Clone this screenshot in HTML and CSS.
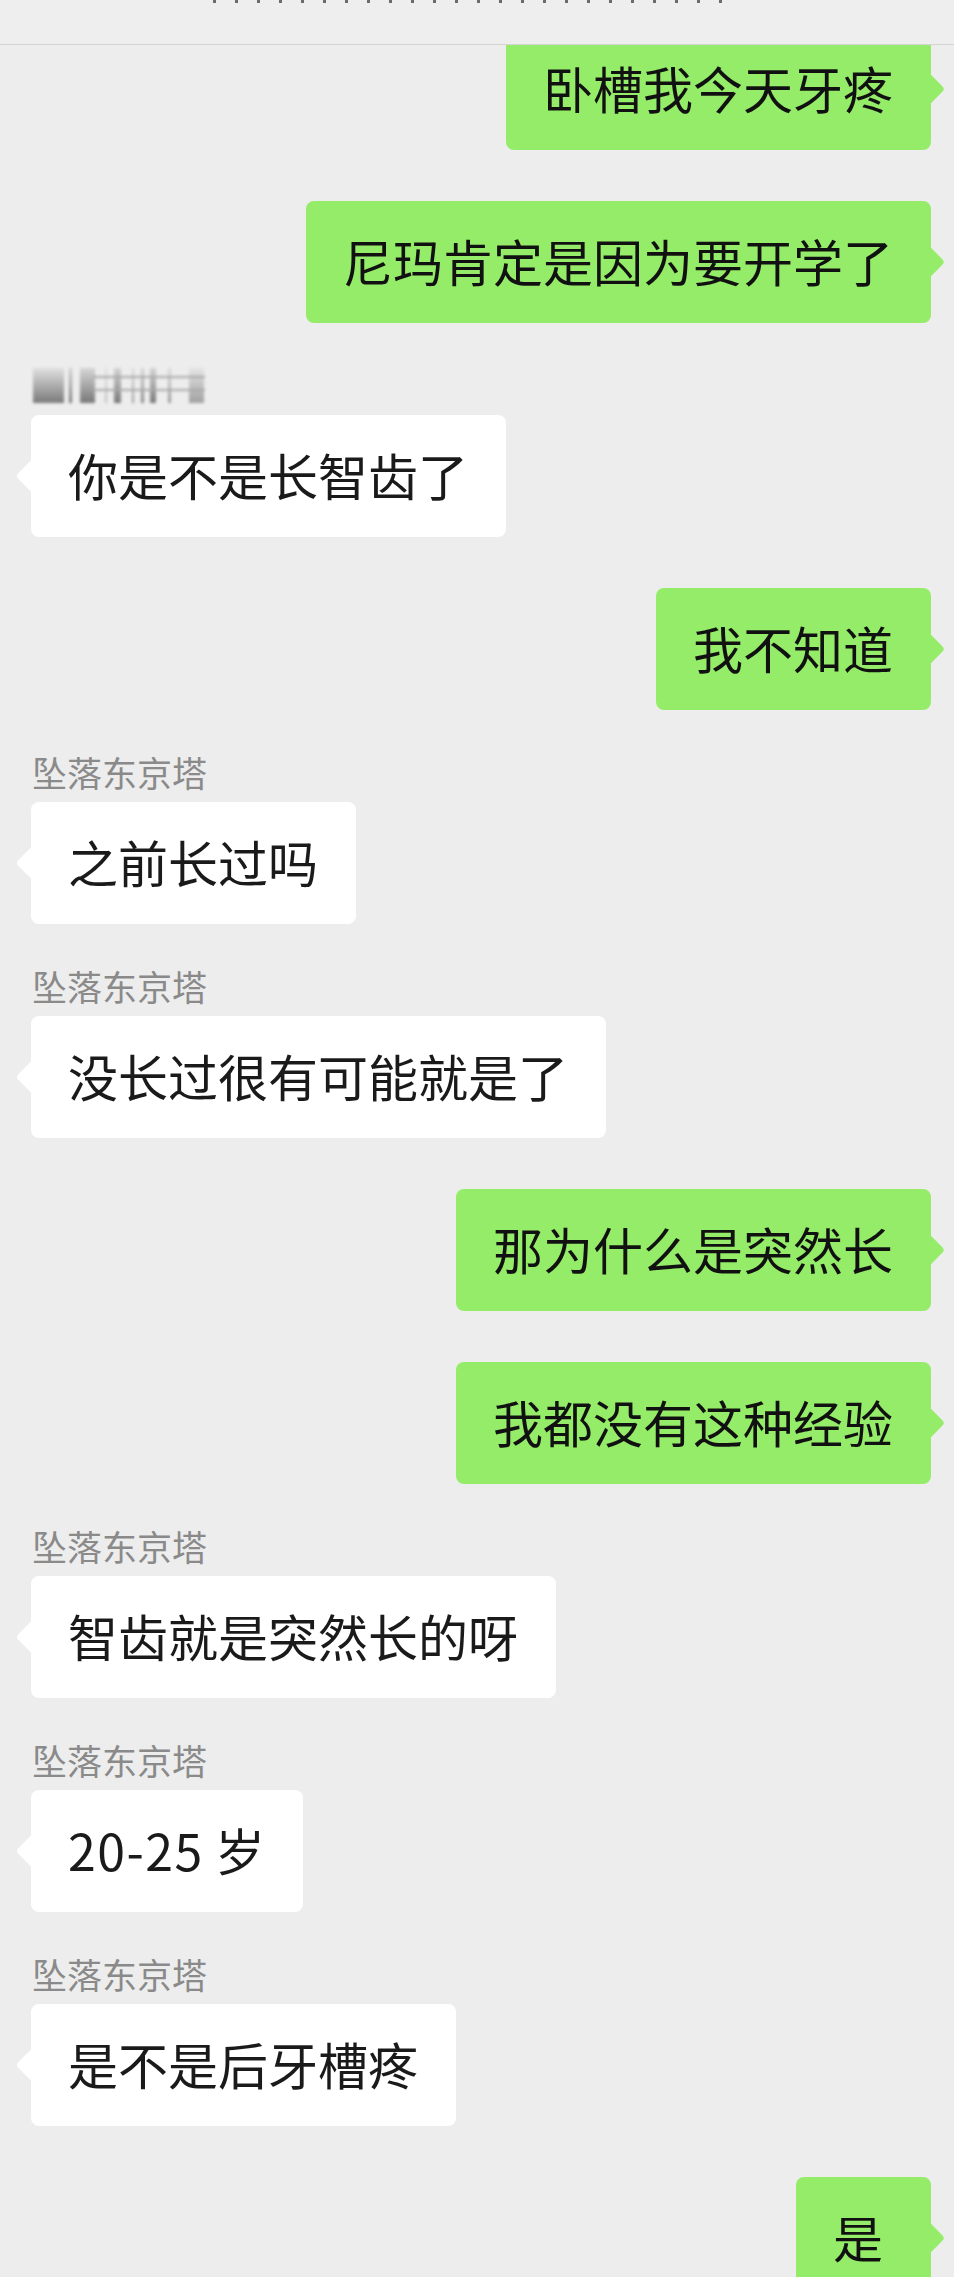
FILE: index.html
```html
<!DOCTYPE html>
<html lang="zh-CN">
<head>
<meta charset="utf-8">
<title>聊天</title>
<link rel="stylesheet" href="styles.css">
</head>
<body>
<div class="header"><div class="title-remnant"></div></div>
<div class="chat">
  <div class="msg right"><div class="bubble">卧槽我今天牙疼</div></div>
  <div class="msg right"><div class="bubble">尼玛肯定是因为要开学了</div></div>
  <div class="msg left"><div class="name blurred"></div><div class="bubble">你是不是长智齿了</div></div>
  <div class="msg right"><div class="bubble">我不知道</div></div>
  <div class="msg left"><div class="name">坠落东京塔</div><div class="bubble">之前长过吗</div></div>
  <div class="msg left"><div class="name">坠落东京塔</div><div class="bubble">没长过很有可能就是了</div></div>
  <div class="msg right"><div class="bubble">那为什么是突然长</div></div>
  <div class="msg right"><div class="bubble">我都没有这种经验</div></div>
  <div class="msg left"><div class="name">坠落东京塔</div><div class="bubble">智齿就是突然长的呀</div></div>
  <div class="msg left"><div class="name">坠落东京塔</div><div class="bubble"><span class="num">20-25</span> 岁</div></div>
  <div class="msg left"><div class="name">坠落东京塔</div><div class="bubble">是不是后牙槽疼</div></div>
  <div class="msg right"><div class="bubble">是</div></div>
</div>
</body>
</html>
```
FILE: styles.css
```css
html, body {
  margin: 0;
  padding: 0;
}
body {
  background: #ededed;
  font-family: "Noto Sans CJK SC", "Noto Sans", sans-serif;
  color: #1a1a1a;
  width: 954px;
  height: 2277px;
  overflow: hidden;
  position: relative;
}
.header {
  position: absolute;
  top: 0;
  left: 0;
  right: 0;
  height: 44px;
  background: #eeeeee;
  border-bottom: 1px solid #d4d4d4;
  z-index: 5;
}
.title-remnant {
  margin-left: 213px;
  width: 514px;
  height: 3px;
  background: repeating-linear-gradient(90deg, #333 0 3px, transparent 3px 22px);
  opacity: 0.7;
}
.chat {
  padding-top: 28px;
  display: flex;
  flex-direction: column;
}
.msg {
  display: flex;
  flex-direction: column;
}
.msg.right {
  margin-top: 51px;
  align-items: flex-end;
  padding-right: 23px;
}
.msg.right:first-child {
  margin-top: 0;
}
.msg.left {
  margin-top: 42px;
  align-items: flex-start;
  padding-left: 31px;
}
.name {
  font-size: 35px;
  line-height: 40px;
  height: 40px;
  margin-bottom: 10px;
  color: #8a8a8a;
  padding-left: 1px;
  white-space: nowrap;
}
.name.blurred {
  width: 174px;
  height: 35px;
  margin-top: 3px;
  margin-bottom: 12px;
  padding-left: 2px;
  filter: blur(1.4px);
  background:
    linear-gradient(#a8a8a8, #a8a8a8) 62px 8px / 112px 2px no-repeat,
    linear-gradient(#a8a8a8, #a8a8a8) 62px 21px / 112px 2px no-repeat,
    linear-gradient(#e0e0e0, #7a7a7a) 2px 0 / 31px 35px no-repeat,
    linear-gradient(#cfcfcf, #7a7a7a) 38px 0 / 3px 35px no-repeat,
    linear-gradient(#d6d6d6, #777) 49px 0 / 15px 35px no-repeat,
    linear-gradient(#e0e0e0, #bdbdbd) 74px 0 / 2px 35px no-repeat,
    linear-gradient(#d4d4d4, #7a7a7a) 83px 0 / 7px 35px no-repeat,
    linear-gradient(#dcdcdc, #9a9a9a) 101px 0 / 2px 35px no-repeat,
    linear-gradient(#d6d6d6, #888) 110px 0 / 3px 35px no-repeat,
    linear-gradient(#d4d4d4, #7a7a7a) 119px 0 / 6px 35px no-repeat,
    linear-gradient(#dcdcdc, #9a9a9a) 137px 0 / 3px 35px no-repeat,
    linear-gradient(#e4e4e4, #a0a0a0) 158px 0 / 15px 35px no-repeat;
}
.bubble {
  position: relative;
  box-sizing: border-box;
  min-width: 135px;
  font-size: 50px;
  line-height: 56px;
  padding: 31px 38px 35px 37px;
  border-radius: 8px;
  background: #ffffff;
  white-space: nowrap;
}
.num {
  letter-spacing: 1.5px;
}
.left .bubble::before {
  content: "";
  position: absolute;
  left: -11px;
  top: 50%;
  width: 22px;
  height: 22px;
  margin-top: -11px;
  background: #ffffff;
  transform: rotate(45deg);
  border-radius: 0 0 0 4px;
}
.right .bubble {
  background: #95ec69;
  color: #111;
}
.right .bubble::after {
  content: "";
  position: absolute;
  right: -10px;
  top: 50%;
  width: 20px;
  height: 20px;
  margin-top: -10px;
  background: #95ec69;
  transform: rotate(45deg);
  border-radius: 0 4px 0 0;
}
```
